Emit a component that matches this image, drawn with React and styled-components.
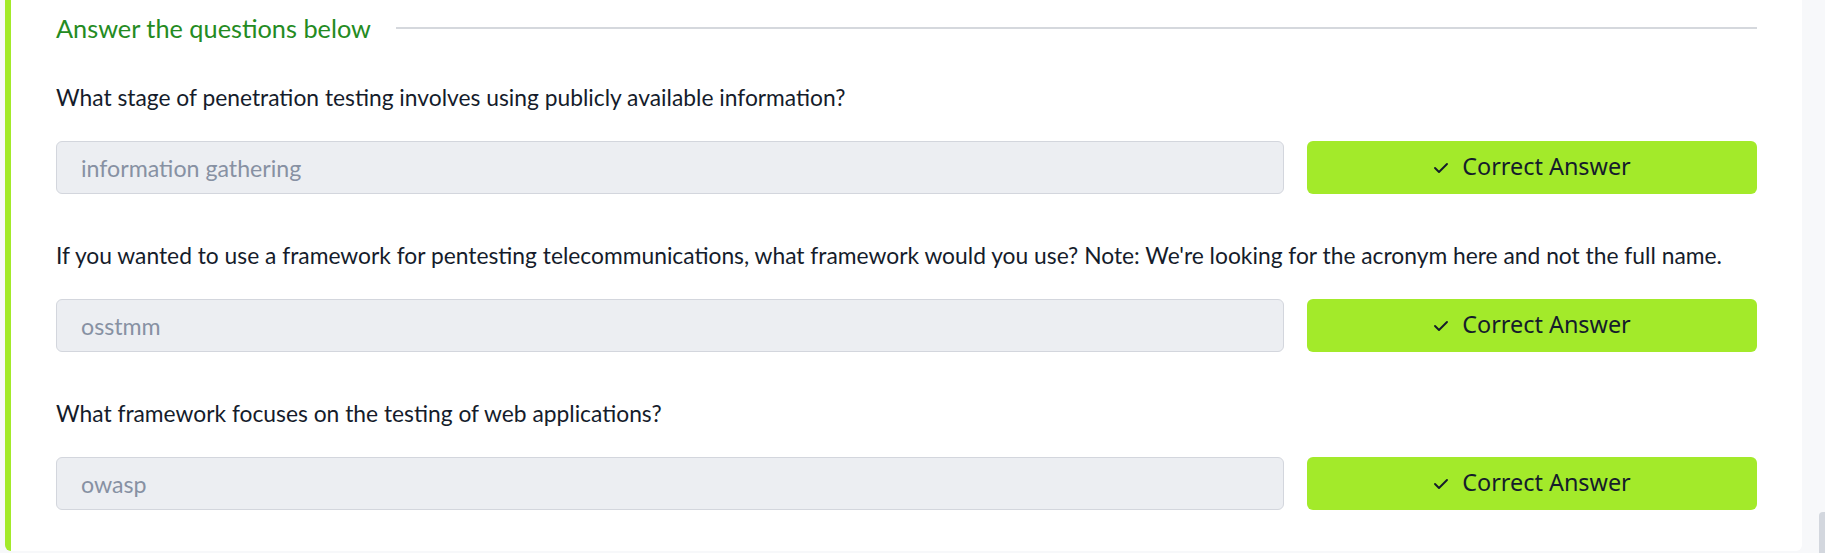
import React from "react";
import styled, { createGlobalStyle } from "styled-components";

const GlobalStyle = createGlobalStyle`
  html, body {
    margin: 0;
    padding: 0;
    background: #f7f8fa;
  }
  body {
    font-family: "Lato", "Noto Sans", sans-serif;
    color: #151c2b;
  }
`;

const Page = styled.div`
  display: flex;
  height: 553px;
  overflow: hidden;
  padding-left: 5px;
  box-sizing: border-box;
`;

const Card = styled.section`
  flex: 1;
  height: 551px;
  background: #ffffff;
  border-left: 6px solid #a3ea2a;
  border-radius: 0 0 6px 6px;
  padding: 0 45px 0 45px;
  box-sizing: border-box;
`;

const Gutter = styled.div`
  width: 23px;
  display: flex;
  flex-direction: column;
  justify-content: flex-end;
  align-items: flex-end;
`;

const Thumb = styled.div`
  width: 6px;
  height: 41px;
  background: #d3d7de;
  border-radius: 4px 0 0 0;
`;

const Header = styled.div`
  display: flex;
  align-items: center;
  height: 56px;
  gap: 25px;
`;

const Title = styled.h3`
  margin: 0;
  font-weight: 400;
  font-size: 25.3px;
  color: #248b22;
  white-space: nowrap;
`;

const Rule = styled.div`
  flex: 1;
  height: 2px;
  background: #d5d8dd;
`;

const Question = styled.div`
  margin-top: ${(p) => (p.$first ? "26px" : "46px")};
`;

const Prompt = styled.p`
  margin: 0 0 29px;
  font-size: 22.8px;
  line-height: 30px;
  color: #151c2b;
`;

const AnswerRow = styled.div`
  display: grid;
  grid-template-columns: 1fr 450px;
  gap: 23px;
`;

const AnswerInput = styled.input`
  height: 53px;
  box-sizing: border-box;
  border: 1px solid #d3d6dd;
  border-radius: 6px;
  background: #eceef2;
  padding: 0 24px;
  font-family: "Lato", "Noto Sans", sans-serif;
  font-size: 23.2px;
  color: #8791a3;
  outline: none;
`;

const SubmitButton = styled.button`
  height: 53px;
  border: none;
  border-radius: 6px;
  background: #a3ea2a;
  color: #151c2b;
  font-family: "Noto Sans", sans-serif;
  font-size: 23.4px;
  line-height: 1;
  padding: 0 0 2px;
  display: flex;
  align-items: center;
  justify-content: center;
  gap: 13px;
  cursor: pointer;

  svg {
    margin-top: 2px;
  }
`;

const CheckIcon = () => (
  <svg width="16" height="12" viewBox="0 0 16 12" fill="none">
    <polyline
      points="2,6 6,10 14,2"
      stroke="#151c2b"
      strokeWidth="1.9"
      strokeLinecap="round"
      strokeLinejoin="round"
    />
  </svg>
);

const questions = [
  {
    text: "What stage of penetration testing involves using publicly available information?",
    answer: "information gathering",
  },
  {
    text: "If you wanted to use a framework for pentesting telecommunications, what framework would you use? Note: We're looking for the acronym here and not the full name.",
    answer: "osstmm",
  },
  {
    text: "What framework focuses on the testing of web applications?",
    answer: "owasp",
  },
];

const App = () => {
  return (
    <>
      <GlobalStyle />
      <Page>
        <Card>
          <Header>
            <Title>Answer the questions below</Title>
            <Rule />
          </Header>
          {questions.map((q, i) => (
            <Question key={i} $first={i === 0}>
              <Prompt>{q.text}</Prompt>
              <AnswerRow>
                <AnswerInput value={q.answer} readOnly />
                <SubmitButton type="button">
                  <CheckIcon />
                  Correct Answer
                </SubmitButton>
              </AnswerRow>
            </Question>
          ))}
        </Card>
        <Gutter>
          <Thumb />
        </Gutter>
      </Page>
    </>
  );
};

export default App;
